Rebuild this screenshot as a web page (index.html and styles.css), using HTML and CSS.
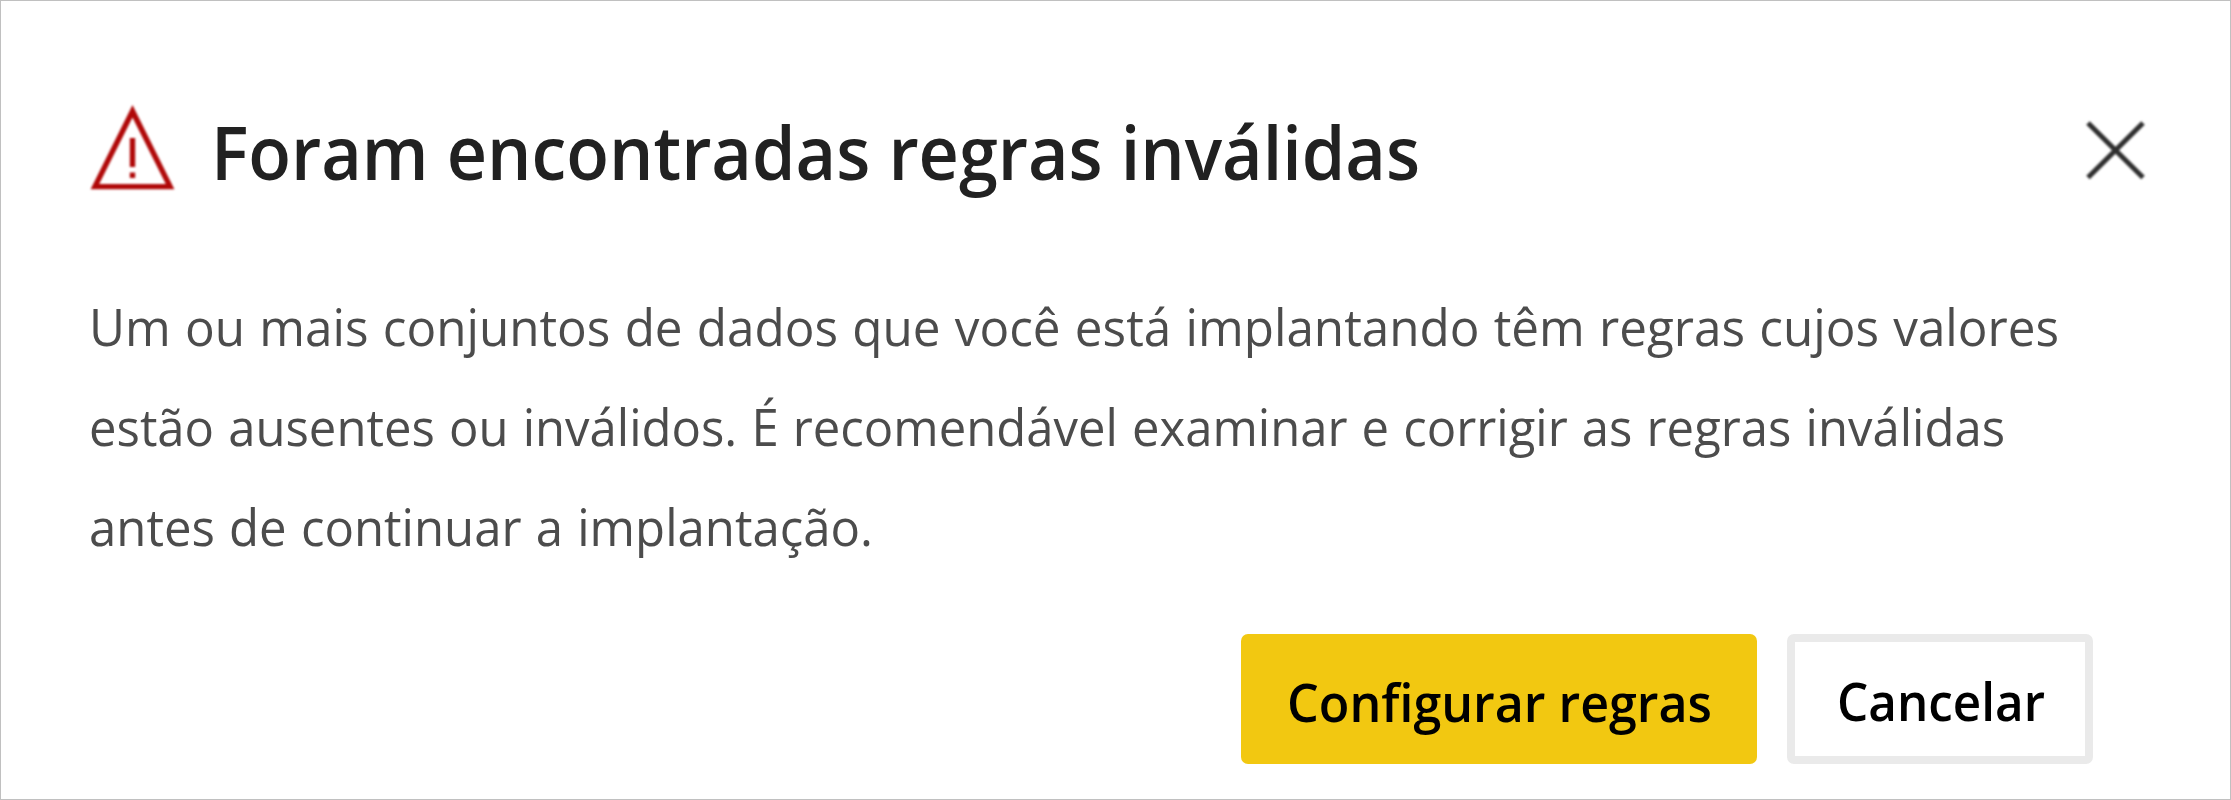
FILE: index.html
```html
<!DOCTYPE html>
<html lang="pt-BR">
<head>
<meta charset="utf-8">
<title>Foram encontradas regras inválidas</title>
<link rel="stylesheet" href="styles.css">
</head>
<body>
<main class="dialog" role="dialog">
  <header class="header">
    <svg class="warning" viewBox="0 0 88 92" aria-hidden="true">
      <path fill-rule="evenodd" d="M43.5 5 L85.4 89.3 H1.6 Z M43.5 17.5 L10.2 84 H76.8 Z"/>
      <path d="M40.8 38 H46.2 V67 H40.8 Z M40.8 72.5 H46.2 V78 H40.8 Z"/>
    </svg>
    <h1 class="title"><svg class="fit" width="1208" height="90"><text x="-1" y="65" textLength="1209" lengthAdjust="spacingAndGlyphs">Foram encontradas regras inválidas</text></svg></h1>
    <button class="close" aria-label="Fechar"><svg viewBox="0 0 60 60"><path d="M2 3 L57 57.5 M57 3 L2 57.5"/></svg></button>
  </header>
  <p class="message">
    <svg class="fit" width="1972" height="100"><text x="0" y="58" textLength="1970" lengthAdjust="spacingAndGlyphs">Um ou mais conjuntos de dados que você está implantando têm regras cujos valores</text></svg>
    <svg class="fit" width="1972" height="100"><text x="0" y="58" textLength="1916" lengthAdjust="spacingAndGlyphs">estão ausentes ou inválidos. É recomendável examinar e corrigir as regras inválidas</text></svg>
    <svg class="fit" width="1972" height="100"><text x="0" y="58" textLength="784" lengthAdjust="spacingAndGlyphs">antes de continuar a implantação.</text></svg>
  </p>
  <footer class="actions">
    <button class="button primary"><svg class="fit" width="424" height="80"><text x="0" y="63" textLength="425" lengthAdjust="spacingAndGlyphs">Configurar regras</text></svg></button>
    <button class="button secondary"><svg class="fit" width="207" height="80"><text x="0" y="62" textLength="208" lengthAdjust="spacingAndGlyphs">Cancelar</text></svg></button>
  </footer>
</main>
</body>
</html>
```
FILE: styles.css
```css
* { box-sizing: border-box; }
body { margin: 0; background: #fff; font-family: "Open Sans", "Noto Sans", sans-serif; }
.dialog { width: 2231px; height: 800px; border: 1px solid #c0c0c0; padding: 99px 83px 0 88px; overflow: hidden; }
.header { display: flex; align-items: flex-start; height: 194px; }
.warning { width: 88px; height: 92px; margin-right: 35px; fill: #b00808; filter: blur(0.8px); }
.title { margin: 15px 0 0; font-size: 75px; font-weight: 600; line-height: 0; fill: #212121; }
.fit { display: block; overflow: visible; }
.close { margin: 20px 1px 0 auto; width: 60px; height: 60px; padding: 0; border: 0; background: none; }
.close svg { display: block; width: 60px; height: 60px; fill: none; stroke: #2e2e2e; stroke-width: 5; overflow: visible; filter: blur(0.8px); }
.message { margin: -6px 0 0; font-size: 52px; line-height: 0; word-spacing: 1.5px; fill: #4c4c4c; }
.actions { display: flex; justify-content: flex-end; gap: 30px; margin: 46px 54px 0 0; }
.button { display: flex; align-items: center; justify-content: center; height: 130px; border: 0; border-radius: 7px; padding: 0; font: 600 52px "Open Sans", sans-serif; fill: #000; }
.primary { width: 516px; background: #f2c811; }
.secondary { width: 306px; background: #fff; border: 8px solid #eaeaea; }
```
